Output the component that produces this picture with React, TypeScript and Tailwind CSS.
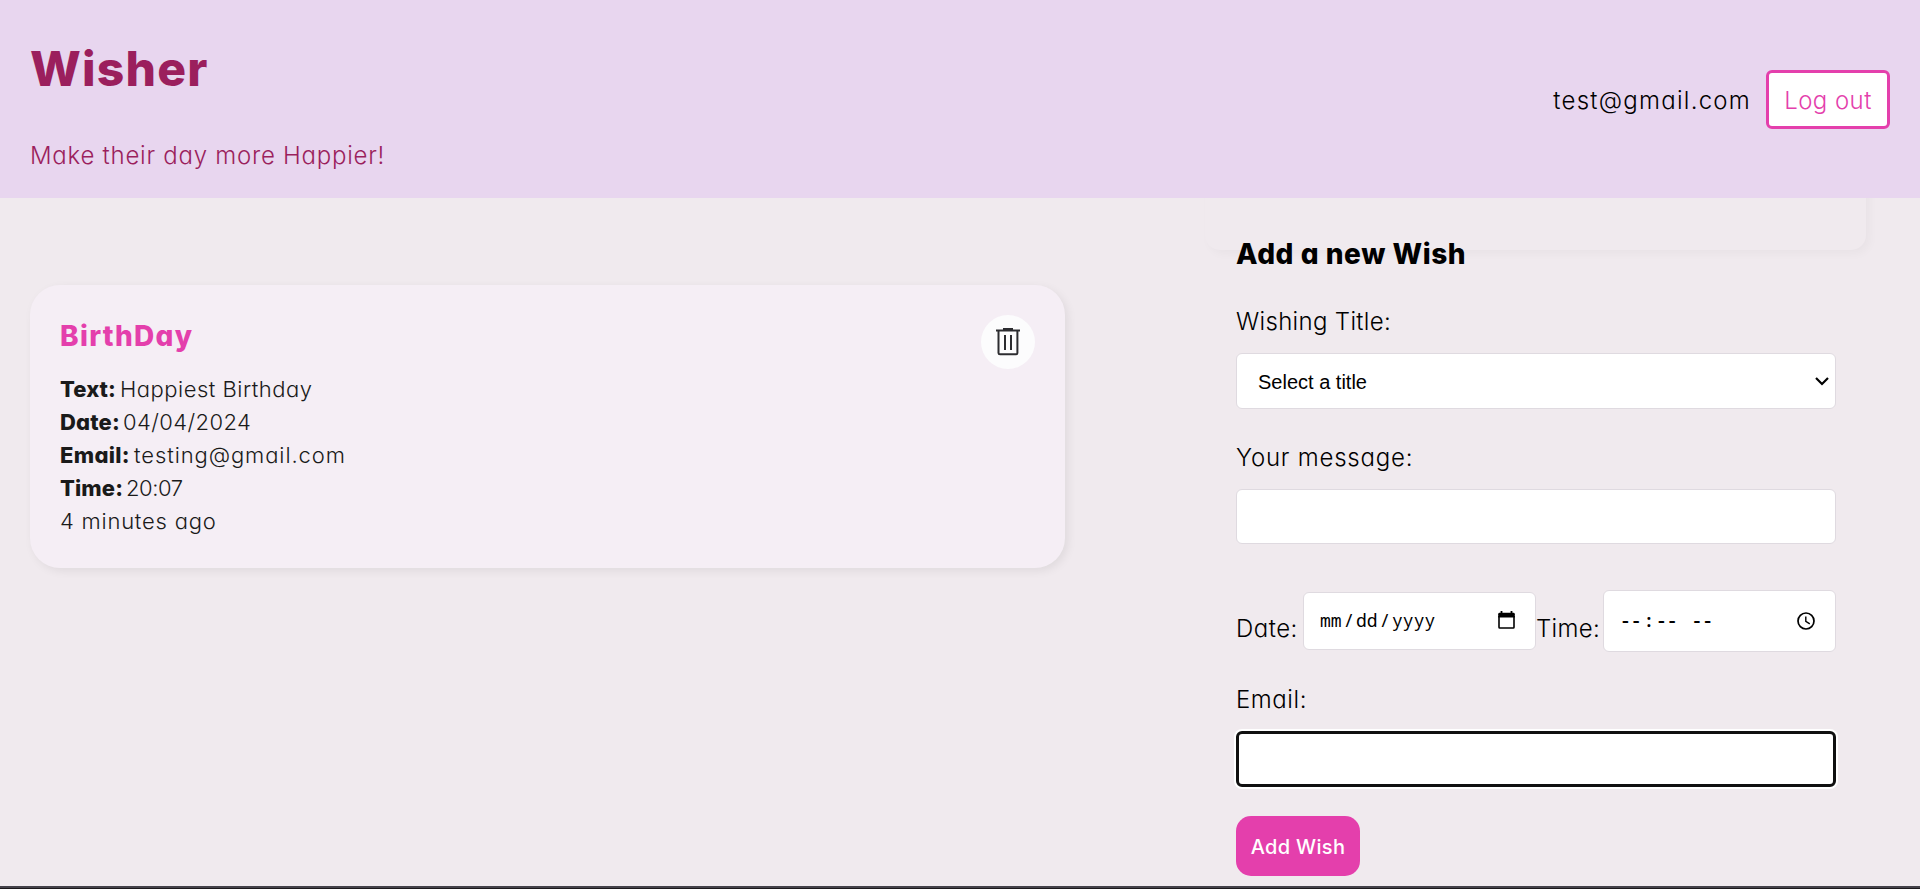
import type { ReactNode } from "react";

const fieldBox = "rounded-[6px] border border-[#dfdae0] bg-white";

function Label({ children, className }: { children: ReactNode; className: string }) {
  return <label className={`block text-[24px] leading-[36px] font-light text-black whitespace-nowrap ${className}`}>{children}</label>;
}

function CardRow({ name, nameClass, value, valueClass }: { name: string; nameClass: string; value: string; valueClass: string }) {
  return (
    <p className="flex whitespace-nowrap">
      <strong className={`font-extrabold ${nameClass}`}>{name}</strong>
      <span className={valueClass}>{value}</span>
    </p>
  );
}

function TrashIcon() {
  return (
    <svg width="24" height="28" viewBox="0 0 24 28" fill="none" stroke="#2c2c30" strokeWidth="2">
      <path d="M0 2.5H24" />
      <path d="M7 1H17" />
      <path d="M2.5 3V25Q2.5 26.3 4 26.3H20Q21.4 26.3 21.4 25V3" />
      <path d="M9 7V22M15 7V22" strokeWidth="2" />
    </svg>
  );
}

function CalendarIcon() {
  return (
    <svg width="17" height="19" viewBox="0 0 17 19">
      <path d="M3.5 0V3M13.5 0V3" stroke="#000" strokeWidth="1.8" />
      <path d="M1 5V16.2Q1 17 1.8 17H15.2Q16 17 16 16.2V5" fill="none" stroke="#000" strokeWidth="1.6" />
      <path d="M0.2 3.2Q0.2 1.8 1.6 1.8H15.4Q16.8 1.8 16.8 3.2V6.4H0.2Z" fill="#000" />
    </svg>
  );
}

function ClockIcon() {
  return (
    <svg width="18" height="18" viewBox="0 0 18 18" fill="none" stroke="#000">
      <circle cx="9" cy="9" r="8" strokeWidth="1.7" />
      <path d="M8.8 4.5V9.4L12.8 11.9" strokeWidth="1.4" />
    </svg>
  );
}

function Header() {
  return (
    <header className="relative z-10 flex h-[198px] shrink-0 items-start justify-between bg-[#e8d6ef] px-[30px]">
      <div className="pt-[33px] text-[#9b1f5d]">
        <h1 className="text-[48px] leading-[72px] font-extrabold tracking-[1.2px]">Wisher</h1>
        <p className="mt-[33px] text-[24px] leading-[36px] font-light tracking-[0.75px]">Make their day more Happier!</p>
      </div>
      <div className="flex items-center gap-[15px] pt-[70px] text-[24px] leading-[36px] font-light">
        <span className="pt-[2px] tracking-[1.25px] text-black">test@gmail.com</span>
        <button className="h-[59px] w-[124px] rounded-[6px] border-3 border-[#e43fac] bg-white pt-[2px] tracking-[0.43px] text-[#e43fac]">Log out</button>
      </div>
    </header>
  );
}

function WishCard() {
  return (
    <article className="flex h-[283px] w-[1035px] justify-between rounded-[30px] bg-[#f5eef5] p-[30px] shadow-[3px_3px_10px_rgba(0,0,0,0.07)]">
      <div>
        <h3 className="text-[28px] leading-[42px] font-extrabold tracking-[1.3px] text-[#e43fac]">BirthDay</h3>
        <div className="mt-[16px] text-[22px] leading-[33px] font-light text-[#1a1a1a]">
          <CardRow name="Text:" nameClass="w-[60px] tracking-[0.1px]" value="Happiest Birthday" valueClass="tracking-[0.5px]" />
          <CardRow name="Date:" nameClass="w-[63px] tracking-[0.15px]" value="04/04/2024" valueClass="tracking-[0.4px]" />
          <CardRow name="Email:" nameClass="w-[74px] tracking-[0.3px]" value="testing@gmail.com" valueClass="tracking-[0.9px]" />
          <CardRow name="Time:" nameClass="w-[66px] tracking-[0.1px]" value="20:07" valueClass="tracking-[-0.4px]" />
          <p className="tracking-[0.77px]">4 minutes ago</p>
        </div>
      </div>
      <button className="flex size-[54px] items-center justify-center rounded-full bg-[#fcfcfd]">
        <TrashIcon />
      </button>
    </article>
  );
}

function WishForm() {
  return (
    <form className="flex w-[600px] flex-col pt-[35px]">
      <h2 className="text-[28px] leading-[42px] font-extrabold tracking-[0.55px] text-black">Add a new Wish</h2>

      <Label className="mt-[29px] tracking-[0.32px]">Wishing Title:</Label>
      <div className={`mt-[13px] flex h-[56px] items-center justify-between pr-[6px] pl-[21px] ${fieldBox}`}>
        <span className="pt-[2px] font-['Liberation_Sans',Arial,sans-serif] text-[20px] text-black">Select a title</span>
        <svg width="14" height="10" viewBox="0 0 14 10" fill="none" stroke="#000" strokeWidth="2.2">
          <path d="M1 2L7 8L13 2" />
        </svg>
      </div>

      <Label className="mt-[31px] tracking-[0.78px]">Your message:</Label>
      <div className={`mt-[13px] h-[55px] ${fieldBox}`} />

      <div className="mt-[46px] flex h-[61px] items-center font-light">
        <Label className="w-[67px] shrink-0 pt-[17px] tracking-[0.5px]">Date:</Label>
        <div className={`flex h-[58px] w-[233px] shrink-0 items-center justify-between pr-[20px] pl-[16px] ${fieldBox}`}>
          <span className="flex gap-[1.8px] font-['Noto_Sans_Mono','DejaVu_Sans_Mono',monospace] text-[18px] font-normal text-black">
            <span>mm</span><span>/</span><span>dd</span><span>/</span><span>yyyy</span>
          </span>
          <CalendarIcon />
        </div>
        <Label className="w-[67px] shrink-0 pt-[17px] tracking-[0.3px]">Time:</Label>
        <div className={`flex h-[62px] w-[233px] shrink-0 items-center justify-between pr-[20px] pl-[16px] ${fieldBox}`}>
          <span className="flex gap-[1.8px] font-['Noto_Sans_Mono','DejaVu_Sans_Mono',monospace] text-[18px] font-semibold text-black">
            <span>--</span><span>:</span><span>--</span><span className="pl-[12px]">--</span>
          </span>
          <ClockIcon />
        </div>
      </div>

      <Label className="mt-[31px] tracking-[0.55px]">Email:</Label>
      <div className="mt-[13px] h-[56px] rounded-[6px] border-3 border-[#101010] bg-white shadow-[0_0_0_2px_#fff]" />

      <button type="button" className="mt-[29px] h-[60px] w-[124px] rounded-[15px] bg-[#e43fac] pt-[2px] text-[20px] leading-[30px] font-medium tracking-[0.31px] text-white">
        Add Wish
      </button>
    </form>
  );
}

export default function App() {
  return (
    <div className="flex h-[889px] w-[1920px] flex-col overflow-hidden bg-[#f0eaee] font-['Inter',sans-serif] [font-feature-settings:'cv11']">
      <Header />
      <main className="relative flex h-[688px] shrink-0 justify-between pr-[84px] pl-[30px]">
        <div className="absolute top-[-60px] left-[1205px] h-[112px] w-[661px] rounded-[15px] bg-[#f0eaee] shadow-[4px_4px_10px_rgba(0,0,0,0.03)]" />
        <section className="pt-[87px]">
          <WishCard />
        </section>
        <section className="relative">
          <WishForm />
        </section>
      </main>
      <footer className="h-[3px] shrink-0 border-b border-[#1c181b] bg-[#45424a]" />
    </div>
  );
}
